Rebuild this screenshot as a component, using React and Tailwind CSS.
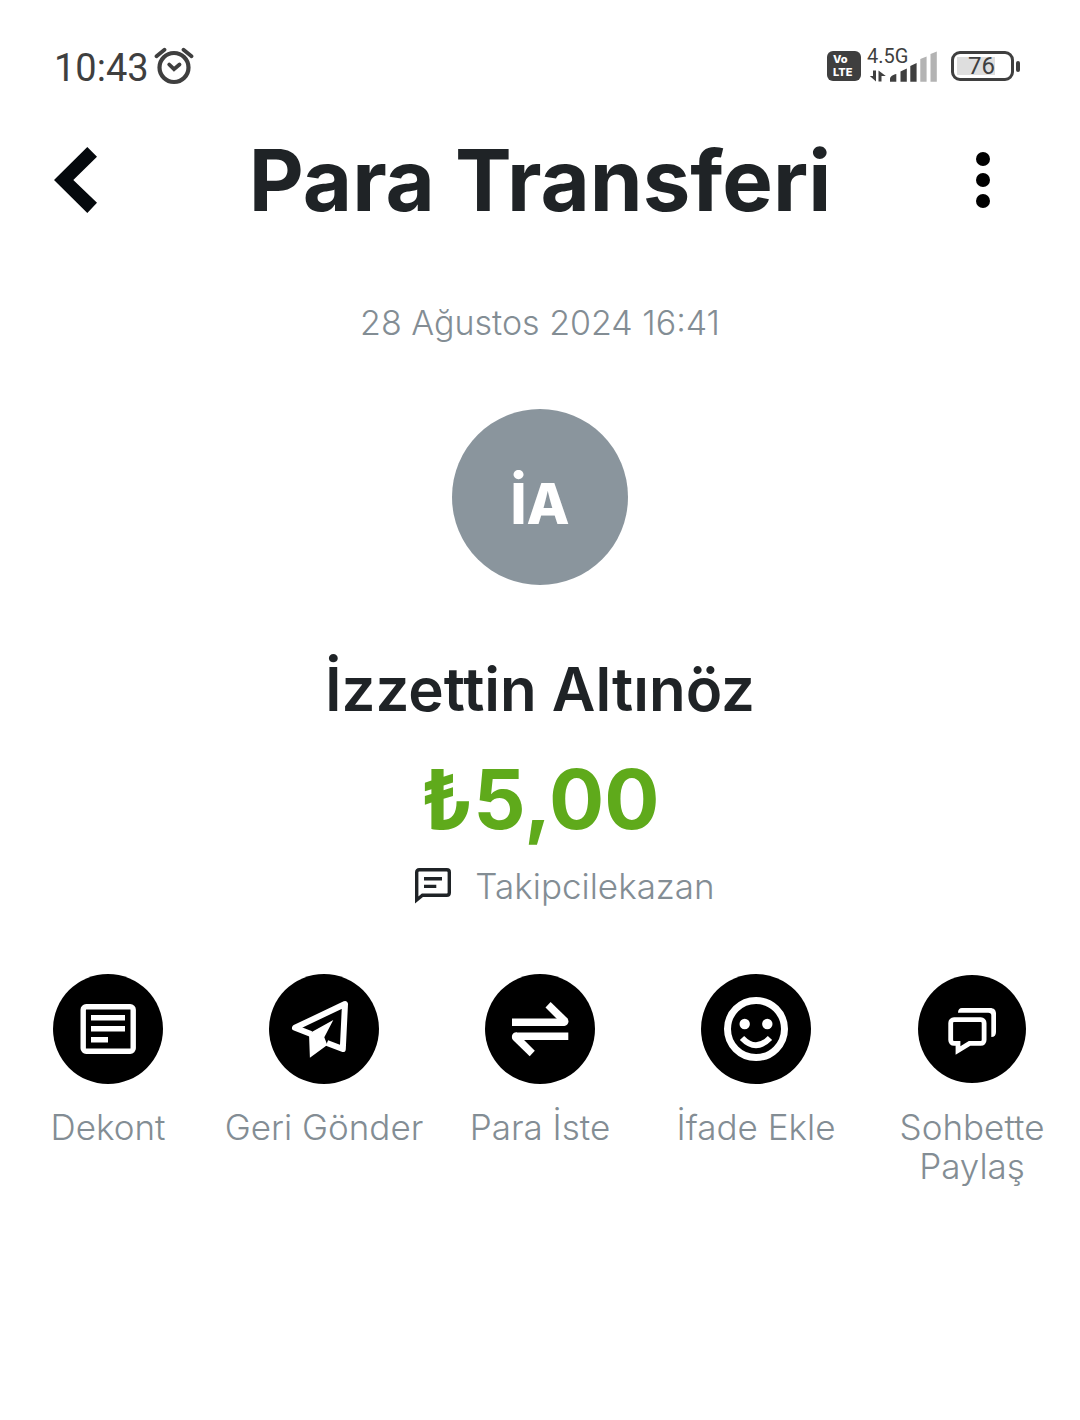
import React from "react";

function AlarmIcon() {
  return (
    <svg width="40" height="38" viewBox="0 0 40 38" fill="none" stroke="#3f3f3f" strokeWidth="4.2" strokeLinecap="round" aria-hidden="true">
      <circle cx="20" cy="20.5" r="14.5" />
      <path d="M15.200 17.500l4.800 4.700 5.500-4.700" strokeWidth="3.8" />
      <path d="M2.500 9.300l8-6.500M29.500 2.800l8 6.500" strokeWidth="3.8" />
    </svg>
  );
}

function SignalIcon() {
  return (
    <svg width="70" height="32" viewBox="0 0 70 32" fill="#3f3f3f" aria-hidden="true">
      <path d="M6 20.500H9V31.500L2.800 26H6zM11.500 31.500h3V26h4.300l-7.300-5.500z" />
      <path d="M23 29c0-2.500 3-4.500 6.300-5v7.700H23z" />
      <path d="M33.500 21.500l6.300-3v13.200h-6.300z" />
      <path d="M43.300 16l6.300-3v18.700h-6.300z" />
      <path d="M53.300 9l6.300-2.500v25.200h-6.300zM63.500 4l6.300-2.500v30.200h-6.300z" fill="#b3b3b3" />
    </svg>
  );
}

function StatusBar() {
  return (
    <div className="flex items-center justify-between pl-[54px] pr-[60px] h-[42px] font-[Roboto,sans-serif] text-[#3f3f3f]">
      <div className="flex items-center gap-[5px]">
        <span className="text-[38px] leading-[42px] pt-1">10:43</span>
        <AlarmIcon />
      </div>
      <div className="flex items-center">
        <div className="w-[34px] h-[30px] rounded-[6px] bg-[#3f3f3f] text-white font-[Inter,sans-serif] font-extrabold text-[11px] leading-[13px] pt-[2px] pl-[6px]">
          <span className="block">Vo</span>
          <span className="block">LTE</span>
        </div>
        <div className="relative ml-[6px]">
          <SignalIcon />
          <span className="absolute left-0 -top-1 text-[20px] leading-[20px]">4.5G</span>
        </div>
        <div className="ml-[14px] flex items-center gap-[2px]">
          <div className="w-[63px] h-[30px] rounded-[9px] border-[3px] border-[#3f3f3f] p-[3px]">
            <div className="h-full w-[38px] bg-[#dedede] flex items-center justify-end text-[24px] leading-[24px]">76</div>
          </div>
          <div className="w-[4px] h-[11px] rounded-[2px] bg-[#3f3f3f]" />
        </div>
      </div>
    </div>
  );
}

const ICONS = {
  receipt: (
    <>
      <rect x="30.200" y="32.700" width="50" height="44.500" rx="3" strokeWidth="5.400" />
      <path d="M38 43.800h34M38 54.800h34M38 65.800h17" strokeWidth="5.600" />
    </>
  ),
  send: (
    <>
      <path d="M42 60L26 53.800 76 30l-2.200 45L58 69" strokeWidth="6" strokeLinejoin="round" />
      <path d="M64.300 46L40 59.500l.9 24.200L58.300 71l-3-7.700z" fill="#fff" stroke="none" />
    </>
  ),
  swap: (
    <>
      <path d="M27 48.200h52.500" strokeWidth="7.600" />
      <path d="M65.600 28l16.700 16.200c2.400 2.800.8 7.800-3.300 7.800l-4-4-14.500-14.500z" fill="#fff" stroke="none" />
      <path d="M83.300 62.200H31" strokeWidth="7.600" />
      <path d="M44.700 82.300L28 66.100c-2.400-2.800-.8-7.800 3.300-7.800l4 4 14.500 14.500z" fill="#fff" stroke="none" />
    </>
  ),
  smile: (
    <>
      <circle cx="55" cy="55" r="28.500" strokeWidth="7" />
      <circle cx="43.700" cy="50" r="5.200" fill="#fff" stroke="none" />
      <circle cx="66.300" cy="50" r="5.200" fill="#fff" stroke="none" />
      <path d="M41 64q14 14.500 28 0" strokeWidth="6" />
    </>
  ),
  chat: (
    <>
      <path d="M41 38.700c0-3 1.500-4.700 4-4.700h28c4 0 6 2 6 6v18c0 3-1.500 5-4.700 5V41.500c0-2-1-2.800-3-2.800z" fill="#fff" stroke="none" />
      <path d="M41 69.400h-4c-2 0-3.300-1.300-3.300-3.300V49c0-2 1.300-3.300 3.300-3.300h26.800c2 0 3.300 1.300 3.300 3.300v17.100c0 2-1.300 3.300-3.300 3.300H52.500L41 76.500z" strokeWidth="4.800" />
    </>
  ),
};

const ACTIONS = [
  { icon: "receipt", label: "Dekont", r: 55 },
  { icon: "send", label: "Geri Gönder", r: 55 },
  { icon: "swap", label: "Para İste", r: 55 },
  { icon: "smile", label: "İfade Ekle", r: 55 },
  { icon: "chat", label: "Sohbette Paylaş", r: 54 },
];

function Action({ icon, label, r }) {
  return (
    <button type="button" className="flex flex-col items-center px-1">
      <svg width="110" height="110" viewBox="0 0 110 110" fill="none" stroke="#fff" aria-hidden="true">
        <circle cx="55" cy="55" r={r} fill="#000" stroke="none" />
        {ICONS[icon]}
      </svg>
      <span className="mt-6 text-[35px] leading-[39px] font-light">{label}</span>
    </button>
  );
}

export default function App() {
  return (
    <main lang="tr" className="min-h-screen bg-white pt-[45px] pb-12 font-[Inter,sans-serif] text-[#1f2326]">
      <StatusBar />

      <header className="mt-[45px] px-[54px] h-[96px] flex items-center justify-between">
        <button type="button" aria-label="Geri" className="w-[96px]">
          <svg width="43" height="66" viewBox="0 0 43 66" fill="#05090d">
            <path d="M33.300 0L43 9.700 19.300 33 43 55.800 33.300 66 0 33z" />
          </svg>
        </button>
        <h1 className="text-[85px] leading-[96px] font-bold pt-[2px]">Para Transferi</h1>
        <button type="button" aria-label="Menü" className="w-[96px] flex justify-end pr-9">
          <svg width="14" height="56" viewBox="0 0 14 56" fill="#000">
            <circle cx="7" cy="7" r="7" />
            <circle cx="7" cy="28" r="7" />
            <circle cx="7" cy="49" r="7" />
          </svg>
        </button>
      </header>

      <section className="flex flex-col items-center text-center">
        <time dateTime="2024-08-28T16:41" className="mt-[75px] text-[34px] leading-[40px] font-light text-[#838d94]">
          28 Ağustos 2024 16:41
        </time>
        <div className="mt-[66px] w-[176px] h-[176px] rounded-full bg-[#8a959d] flex items-center justify-center pt-[14px] text-white text-[56px] leading-[64px] font-extrabold">
          İA
        </div>
        <h2 className="mt-[68px] text-[60px] leading-[72px] font-semibold">İzzettin Altınöz</h2>
        <p className="mt-[27px] text-[82px] leading-[96px] font-bold text-[#5faa1b]">₺5,00</p>
        <p className="mt-[18px] ml-[50px] flex items-center gap-6 text-[35px] leading-[40px] font-light text-[#838d94]">
          <svg width="36" height="36" viewBox="0 0 36 36" fill="none" stroke="#1f2326" strokeWidth="3.400" aria-hidden="true">
            <path d="M1.700 32V4.200c0-1.600.9-2.500 2.500-2.500h27.600c1.600 0 2.500.9 2.500 2.500v20.600c0 1.600-.9 2.500-2.500 2.500H7.500z" />
            <path d="M9 10.700h18M9 18.400h12.300" />
          </svg>
          Takipcilekazan
        </p>
      </section>

      <nav className="mt-[68px] grid grid-cols-5 items-start text-[#838d94]">
        {ACTIONS.map((a) => (
          <Action key={a.label} {...a} />
        ))}
      </nav>
    </main>
  );
}
